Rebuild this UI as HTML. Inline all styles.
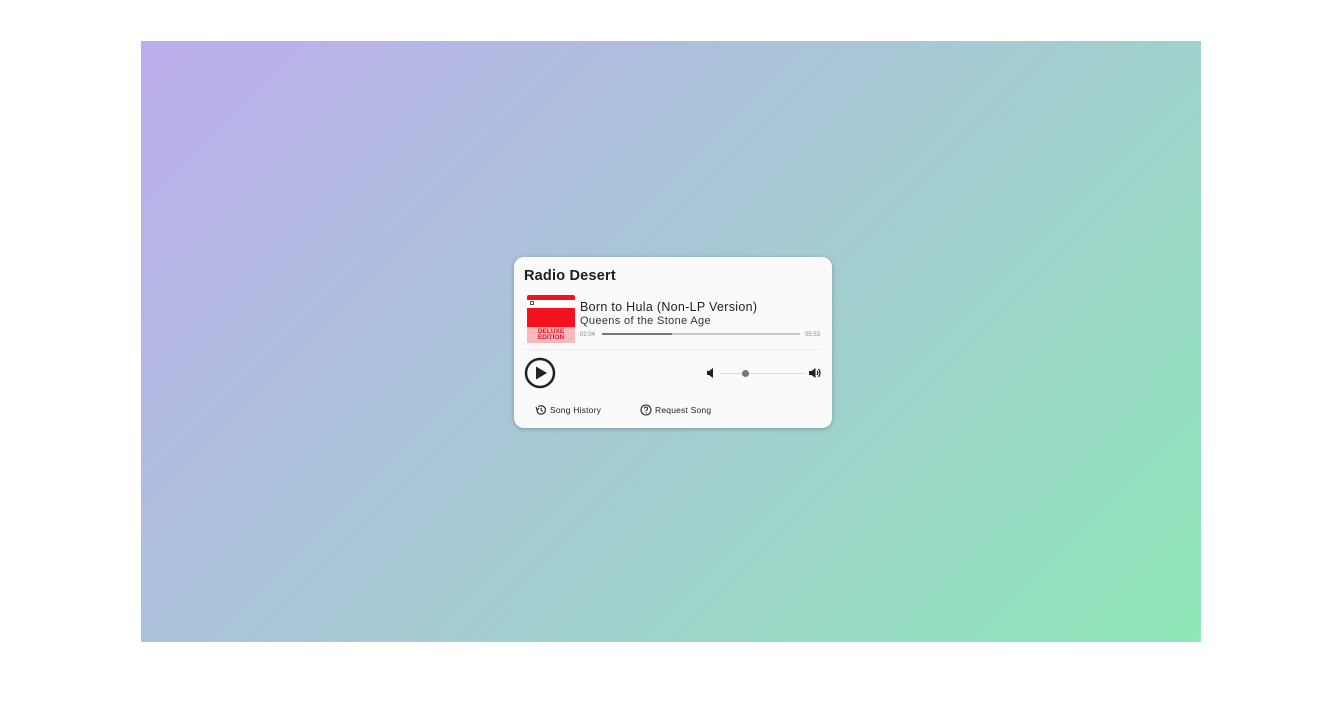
<!DOCTYPE html>
<html><head><meta charset="utf-8"><style>
*{margin:0;padding:0;box-sizing:border-box}
body{width:1341px;height:707px;background:#fff;position:relative;font-family:"Liberation Sans",sans-serif;overflow:hidden}
.bg{position:absolute;left:141px;top:41px;width:1060px;height:601px;background:linear-gradient(135deg,#bdaded 0%,#a8c6d6 45%,#8ee8b8 100%)}
.card{position:absolute;left:514px;top:257px;width:318px;height:171px;background:#fafafa;border-radius:10px;box-shadow:0 1px 4px rgba(0,0,0,.25)}
.t{position:absolute;color:#222;white-space:nowrap}
.art{position:absolute;left:13px;top:38px;width:48px;height:48px;background:#f5101e;border-radius:2px;overflow:hidden}
</style></head><body>
<div class="bg"></div>
<div class="card">
<div class="t" style="left:10px;top:11px;font-size:14.5px;font-weight:bold;letter-spacing:.2px;color:#1e1e1e">Radio Desert</div>
<div class="art">
<div style="position:absolute;left:0;top:5px;width:48px;height:8px;background:#fff"></div>
<div style="position:absolute;left:3px;top:6px;width:4px;height:4px;border:1px solid #555"></div>
<div style="position:absolute;left:0;top:32px;width:48px;height:16px;background:#f7b8be"></div>
<div style="position:absolute;left:0;top:34px;width:48px;text-align:center;color:#e8101e;font-size:6.5px;font-weight:bold;line-height:6px">DELUXE<br>EDITION</div>
</div>
<div class="t" style="left:66px;top:43px;font-size:12.5px;letter-spacing:.3px">Born to Hula (Non-LP Version)</div>
<div class="t" style="left:66px;top:58px;font-size:11px;color:#333;letter-spacing:.35px">Queens of the Stone Age</div>
<div class="t" style="left:66px;top:75px;font-size:6px;color:#888">02:04</div>
<div style="position:absolute;left:88px;top:76px;width:198px;height:2px;background:#c8c8c8"></div>
<div style="position:absolute;left:88px;top:76px;width:70px;height:2px;background:#777"></div>
<div class="t" style="left:291px;top:75px;font-size:6px;color:#888">05:53</div>
<div style="position:absolute;left:10px;top:92px;width:298px;height:1px;background:#ececec"></div>
<svg style="position:absolute;left:10px;top:100px" width="32" height="32" viewBox="0 0 32 32"><circle cx="16" cy="16" r="14" fill="none" stroke="#222" stroke-width="2.5"/><path d="M12 9.5L23 16L12 22.5Z" fill="#222"/></svg>
<svg style="position:absolute;left:192px;top:110px" width="10" height="12" viewBox="0 0 10 12"><path d="M1 4H3L7 1V11L3 8H1Z" fill="#222"/></svg>
<div style="position:absolute;left:206px;top:116px;width:86px;height:1px;background:#ddd"></div>
<div style="position:absolute;left:228px;top:113px;width:7px;height:7px;border-radius:50%;background:#777"></div>
<svg style="position:absolute;left:294px;top:109px" width="14" height="14" viewBox="0 0 14 14"><path d="M1 5H3.5L7.5 2V12L3.5 9H1Z" fill="#222"/><path d="M9 5Q10.5 7 9 9M10.5 3Q13.5 7 10.5 11" stroke="#222" stroke-width="1.3" fill="none"/></svg>
<svg style="position:absolute;left:21px;top:147px" width="12" height="12" viewBox="0 0 12 12"><path d="M2 6A4.2 4.2 0 1 0 3.3 2.9" fill="none" stroke="#222" stroke-width="1.1"/><path d="M1 3L2.2 6L4.2 4" fill="none" stroke="#222" stroke-width="1.1"/><path d="M6.2 3.8V6.3L7.8 7.5" fill="none" stroke="#222" stroke-width="1"/></svg>
<div class="t" style="left:36px;top:148px;font-size:8.5px;letter-spacing:.2px">Song History</div>
<svg style="position:absolute;left:126px;top:147px" width="12" height="12" viewBox="0 0 12 12"><circle cx="6" cy="6" r="5" fill="none" stroke="#222" stroke-width="1.1"/><path d="M4.4 4.6A1.6 1.6 0 1 1 6.3 6.2Q6 6.4 6 7.2" fill="none" stroke="#222" stroke-width="1"/><circle cx="6" cy="8.7" r=".6" fill="#222"/></svg>
<div class="t" style="left:141px;top:148px;font-size:8.5px;letter-spacing:.2px">Request Song</div>
</div>
</body></html>
